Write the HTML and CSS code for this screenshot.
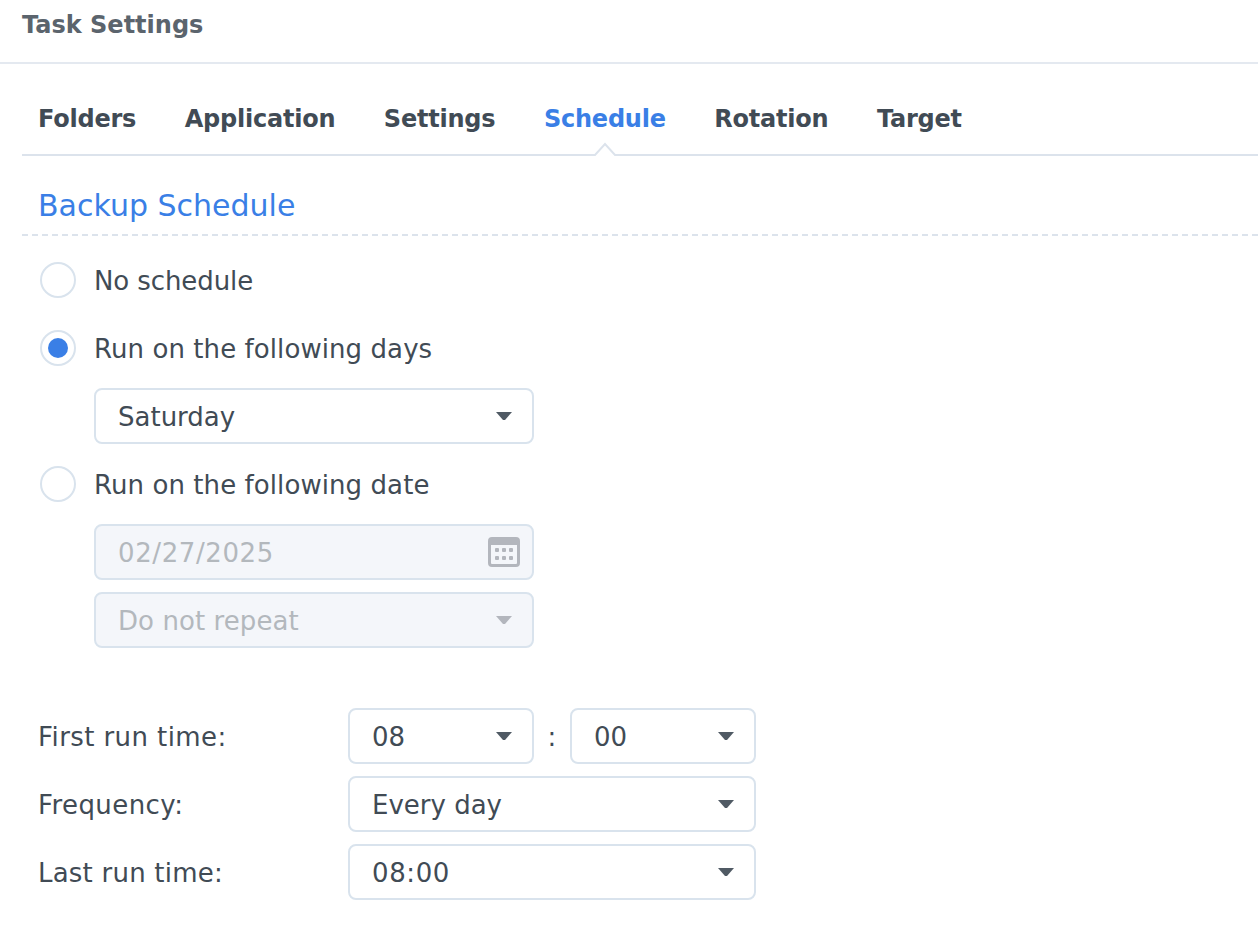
FILE: index.html
```html
<!DOCTYPE html>
<html lang="en">
<head>
<meta charset="utf-8">
<title>Task Settings</title>
<link rel="stylesheet" href="styles.css">
</head>
<body>
<header class="title">Task Settings</header>
<nav class="tabs">
  <span class="tab">Folders</span>
  <span class="tab">Application</span>
  <span class="tab">Settings</span>
  <span class="tab active">Schedule<svg class="notch" width="26" height="14" viewBox="0 0 26 14"><path d="M1 14L13 2l12 12z" fill="#fff"/><path d="M0 13h3L13 2l10 11h3" fill="none" stroke="#dce3ec" stroke-width="2"/></svg></span>
  <span class="tab">Rotation</span>
  <span class="tab">Target</span>
</nav>
<h2 class="section">Backup Schedule</h2>
<main class="form">
  <label class="radio-row first"><span class="radio"></span><span class="txt tight">No schedule</span></label>
  <label class="radio-row second"><span class="radio checked"></span><span class="txt">Run on the following days</span></label>
  <div class="field indent gap-m"><span class="txt">Saturday</span><svg class="arrow" width="16" height="8" viewBox="0 0 16 8"><path d="M0 0h16L9 8H7z" fill="#505a64"/></svg></div>
  <label class="radio-row gap-m"><span class="radio"></span><span class="txt">Run on the following date</span></label>
  <div class="field indent disabled gap-m"><span class="txt num">02/27/2025</span><svg class="cal" width="32" height="30" viewBox="0 0 32 30"><path fill-rule="evenodd" d="M4 0h24a4 4 0 0 1 4 4v22a4 4 0 0 1-4 4H4a4 4 0 0 1-4-4V4a4 4 0 0 1 4-4zM3 8v18a1 1 0 0 0 1 1h24a1 1 0 0 0 1-1V8z" fill="#b3b6bd"/><g fill="#b3b6bd"><rect x="7" y="11" width="4" height="4" rx="1"/><rect x="14" y="11" width="4" height="4" rx="1"/><rect x="21" y="11" width="4" height="4" rx="1"/><rect x="7" y="19" width="4" height="4" rx="1"/><rect x="14" y="19" width="4" height="4" rx="1"/><rect x="21" y="19" width="4" height="4" rx="1"/></g></svg></div>
  <div class="field indent disabled gap-s"><span class="txt wide">Do not repeat</span><svg class="arrow" width="16" height="8" viewBox="0 0 16 8"><path d="M0 0h16L9 8H7z" fill="#b3b6bd"/></svg></div>
  <div class="times">
    <span class="label txt">First run time:</span>
    <div class="pair">
      <div class="field small"><span class="txt">08</span><svg class="arrow" width="16" height="8" viewBox="0 0 16 8"><path d="M0 0h16L9 8H7z" fill="#505a64"/></svg></div>
      <span class="colon txt">:</span>
      <div class="field small"><span class="txt">00</span><svg class="arrow" width="16" height="8" viewBox="0 0 16 8"><path d="M0 0h16L9 8H7z" fill="#505a64"/></svg></div>
    </div>
    <span class="label txt">Frequency:</span>
    <div class="field"><span class="txt">Every day</span><svg class="arrow" width="16" height="8" viewBox="0 0 16 8"><path d="M0 0h16L9 8H7z" fill="#505a64"/></svg></div>
    <span class="label txt last">Last run time:</span>
    <div class="field"><span class="txt num">08:00</span><svg class="arrow" width="16" height="8" viewBox="0 0 16 8"><path d="M0 0h16L9 8H7z" fill="#505a64"/></svg></div>
  </div>
</main>
</body>
</html>
```
FILE: styles.css
```css
* { box-sizing: border-box; }
html, body { margin: 0; padding: 0; background: #fff; }
body {
  width: 1258px;
  height: 940px;
  overflow: hidden;
  font-family: "DejaVu Sans", sans-serif;
  font-size: 26px;
  color: #414b55;
}
.title {
  height: 64px;
  padding: 10px 0 0 22px;
  line-height: 30px;
  font-size: 24px;
  font-weight: 700;
  color: #5b646d;
  border-bottom: 2px solid #e4e9f0;
}
.tabs {
  display: flex;
  gap: 48.5px;
  height: 92px;
  margin-left: 22px;
  padding: 40px 0 0 16px;
  border-bottom: 2px solid #dce3ec;
  font-size: 24px;
  line-height: 30px;
  font-weight: 700;
  letter-spacing: -0.22px;
}
.tab { position: relative; }
.tab.active { color: #3a7fe6; }
.notch { position: absolute; left: 48px; top: 38px; }
.section {
  margin: 0 0 0 22px;
  height: 80px;
  padding: 32px 0 0 16px;
  line-height: 36px;
  font-size: 30px;
  font-weight: 400;
  color: #3a7fe6;
  border-bottom: 2px dashed #dce3ec;
}
.form { display: flex; flex-direction: column; padding-left: 38px; }
.txt { padding-top: 2px; }
.radio-row { display: flex; align-items: center; gap: 18px; height: 36px; margin-left: 2px; letter-spacing: 0.08px; }
.radio-row.first { margin-top: 26px; }
.radio-row.second { margin-top: 32px; }
.tight { letter-spacing: -0.1px; }
.radio {
  display: flex;
  align-items: center;
  justify-content: center;
  width: 36px;
  height: 36px;
  border: 2px solid #d9e3ed;
  border-radius: 50%;
  background: #fff;
}
.radio.checked::after {
  content: "";
  width: 20px;
  height: 20px;
  border-radius: 50%;
  background: #3a7fe6;
}
.field {
  display: flex;
  align-items: center;
  justify-content: space-between;
  height: 56px;
  padding: 0 20px 0 22px;
  border: 2px solid #d9e3ed;
  border-radius: 8px;
  background: #fff;
}
.indent { width: 440px; margin-left: 56px; }
.gap-m { margin-top: 22px; }
.gap-s { margin-top: 12px; }
.disabled { background: #f4f6fa; color: #b3b8bd; }
.wide { letter-spacing: 0.08px; }
.num { letter-spacing: 0.6px; }
.label { letter-spacing: 0.42px; }
.label.last { letter-spacing: 0.22px; }
.cal { margin-right: -8px; }
.times {
  display: grid;
  grid-template-columns: 310px 408px;
  row-gap: 12px;
  align-items: center;
  margin-top: 60px;
}
.pair { display: flex; align-items: center; justify-content: space-between; }
.small { width: 186px; }
.colon { width: 36px; text-align: center; }
```
